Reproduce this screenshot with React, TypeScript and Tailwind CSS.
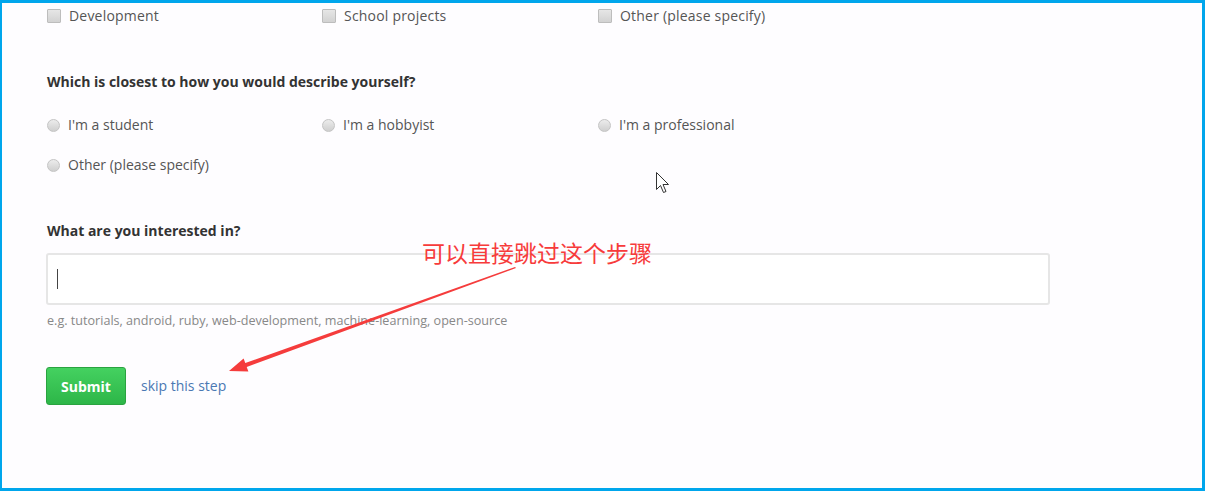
const font = { fontFamily: '"Open Sans", "Noto Sans", sans-serif' };

function Checkbox({ label }: { label: string }) {
  return (
    <label className="flex items-center gap-[8px] text-[14px] leading-5 text-[#555]">
      <span className="w-[14px] h-[14px] border border-[#bdbdbd] bg-gradient-to-b from-[#e6e6e6] to-[#d2d2d2] rounded-[1px]" />
      <span className="tracking-[0.2px]">{label}</span>
    </label>
  );
}

function Radio({ label }: { label: string }) {
  return (
    <label className="flex items-center gap-[8px] text-[14px] leading-5 text-[#555]">
      <span className="w-[13px] h-[13px] rounded-full border border-[#c4c4c4] bg-gradient-to-b from-[#ececec] to-[#cfcfcf]" />
      <span>{label}</span>
    </label>
  );
}

export default function App() {
  return (
    <div
      className="relative w-[1205px] h-[491px] overflow-hidden bg-[#fefdff] border-t-[3px] border-l-2 border-r-[3px] border-b-[3px] border-[#00a6ec]"
      style={font}
    >
      <div className="pl-[45px] pt-[3px]">
        <div className="grid grid-cols-[275px_276px_auto]">
          <Checkbox label="Development" />
          <Checkbox label="School projects" />
          <Checkbox label="Other (please specify)" />
        </div>

        <h3 className="mt-[46px] text-[14px] leading-5 font-bold text-[#333]">
          Which is closest to how you would describe yourself?
        </h3>

        <div className="mt-[23px] grid grid-cols-[275px_276px_auto] gap-y-[20px]">
          <Radio label="I'm a student" />
          <Radio label="I'm a hobbyist" />
          <Radio label="I'm a professional" />
          <Radio label="Other (please specify)" />
        </div>

        <h3 className="mt-[46px] text-[14px] leading-5 font-bold text-[#333]">What are you interested in?</h3>

        <div className="mt-[12px] -ml-px w-[1004px] h-[52px] border-2 border-[#e6e6e6] rounded-[3px] bg-white flex items-center pl-[9px]">
          <span className="w-px h-[20px] bg-[#444]" />
        </div>

        <p className="mt-[8px] text-[12.6px] leading-4 text-[#888]">
          e.g. tutorials, android, ruby, web-development, machine-learning, open-source
        </p>

        <div className="mt-[38px] flex items-center gap-[15px]">
          <button className="-ml-px w-[80px] h-[38px] rounded-[3px] border border-[#2aa340] bg-gradient-to-b from-[#44d160] to-[#2db648] text-white text-[14px] font-bold">
            Submit
          </button>
          <a className="text-[14px] text-[#4a78b3] mt-[-1px]">skip this step</a>
        </div>
      </div>

      {/* annotation */}
      <div
        className="absolute left-[420px] top-[235px] text-[23px] leading-[28px] text-[#f73b3b]"
        style={{ fontFamily: '"Noto Sans CJK SC", sans-serif' }}
      >
        可以直接跳过这个步骤
      </div>
      <svg className="absolute left-[-2px] top-[-3px]" width="1205" height="491" viewBox="0 0 1205 491">
        <polygon
          points="515,267 245.3,363.1 243.6,358.4 229,371 248.4,371.6 246.7,366.9 516,268"
          fill="#f53c3c"
        />
        <path
          d="M656.5 172.5 L656.5 189.5 L660.5 185.5 L663.5 192.5 L666 191.5 L663 184.5 L668.5 184.5 Z"
          fill="white"
          stroke="#333"
          strokeWidth="1"
        />
      </svg>
    </div>
  );
}
